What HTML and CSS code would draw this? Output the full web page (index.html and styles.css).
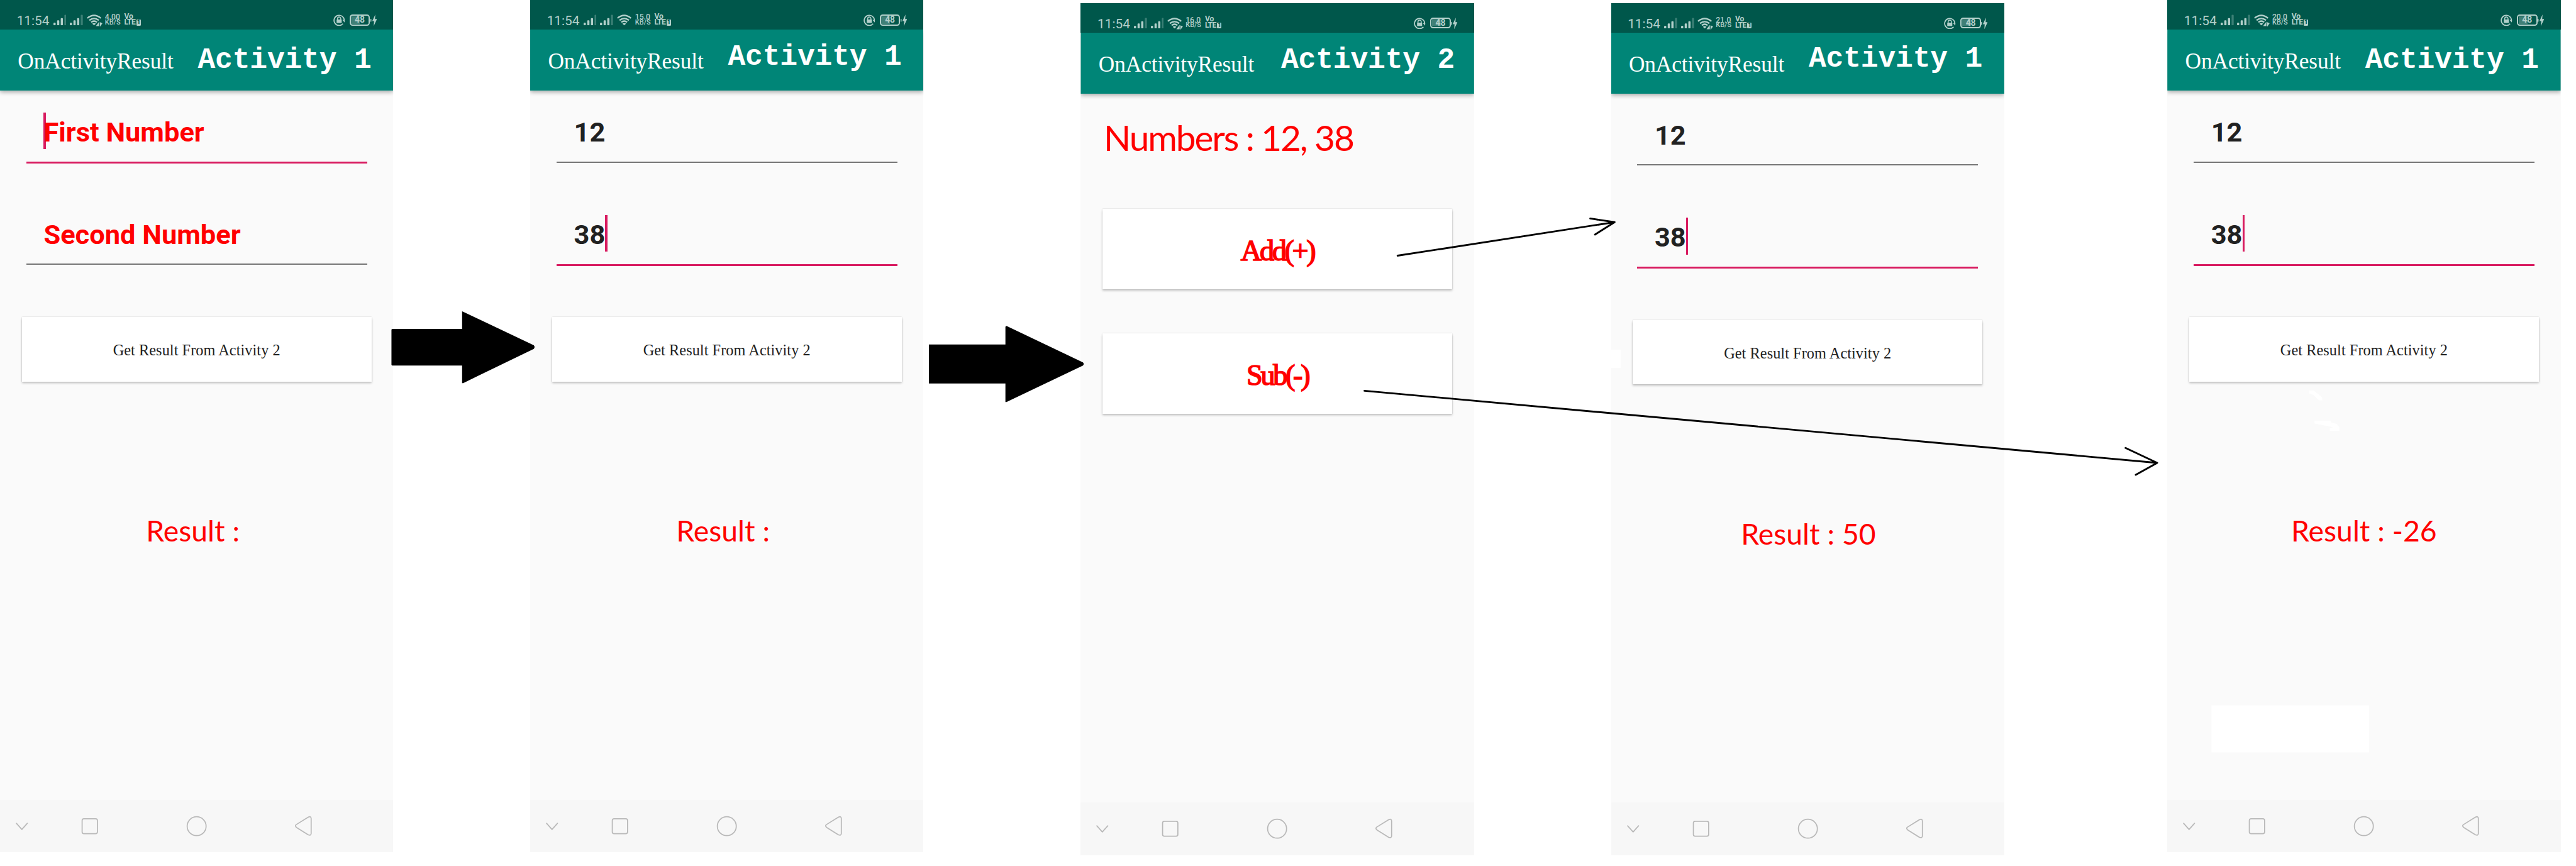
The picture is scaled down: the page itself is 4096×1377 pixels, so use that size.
FILE: index.html
```html
<!DOCTYPE html>
<html lang="en">
<head>
<meta charset="utf-8">
<title>OnActivityResult flow</title>
<link rel="stylesheet" href="styles.css">
</head>
<body>
<svg class="defs" aria-hidden="true">
  <symbol id="signal" viewBox="0 0 36 30">
    <rect x="0" y="22.500" width="6" height="7.500" rx="2.500"/><rect x="10" y="16" width="6" height="14" rx="2"/><rect x="20" y="10" width="6" height="20" rx="2"/><rect x="30" y="1" width="6" height="29" rx="2" opacity=".33"/>
  </symbol>
  <symbol id="wifi" viewBox="0 0 44 34">
    <g fill="none" stroke="currentColor" stroke-width="4"><path d="M1.500 10Q20 -5 38.500 10"/><path d="M7 16Q20 6 33 16"/><path d="M12 21.500Q20 15 28 21.500"/></g>
    <path d="M15 25.500Q20 21 25 25.500L20 30Z"/>
  </symbol>
  <symbol id="wifi-data" viewBox="0 0 44 34">
    <g fill="none" stroke="currentColor" stroke-width="4"><path d="M1.500 10Q20 -5 38.500 10"/><path d="M7 16Q20 6 33 16"/><path d="M12 21.500Q20 15 28 21.500"/></g>
    <path d="M15 25.500Q20 21 25 25.500L20 30Z"/>
    <path d="M25 32L34 20V32ZM36 34V21L43 24Z"/>
  </symbol>
  <symbol id="lock" viewBox="0 0 32 32">
    <path d="M26.500 25.500A14 14 0 1 1 30 16" fill="none" stroke="currentColor" stroke-width="3"/>
    <path d="M25 15H32L31 22Z"/><rect x="9" y="14" width="14" height="9.500" rx="1"/>
    <path d="M11.500 14V11.500a4.500 4.500 0 0 1 9 0V14" fill="none" stroke="currentColor" stroke-width="2.600"/>
  </symbol>
  <symbol id="bolt" viewBox="0 0 18 32"><rect x="0" y="12" width="2.500" height="8" rx="1"/><path d="M13.500 0L5 18H10L9 32L18 12.500H12.500Z"/></symbol>
  <symbol id="nav" viewBox="0 0 1080 144">
    <g fill="none" stroke="#b9b9b9" stroke-width="3" stroke-linecap="round" stroke-linejoin="round">
      <path d="M45 64L60 81L75 64"/><rect x="225.500" y="51.500" width="42" height="41" rx="5"/><circle cx="540" cy="72" r="26"/>
      <path d="M813 68L846 47.500Q854 43 854.500 51V92Q854 99 846 95.500L815 76Q809 71.500 813 68Z"/>
    </g>
  </symbol>
</svg>

<main class="flow">
  <section class="phone">
    <div class="status"><span class="time">11:54</span><svg class="signal"><use href="#signal"/></svg><svg class="signal"><use href="#signal"/></svg><svg class="wifi"><use href="#wifi-data"/></svg><span class="speed"><span>4.00</span><span class="unit">KB/S</span></span><span class="lte"><span>Vo</span><span class="lte-row">LTE<b>1</b></span></span><svg class="lock"><use href="#lock"/></svg><span class="battery">48</span><svg class="bolt"><use href="#bolt"/></svg></div>
    <header class="appbar"><h1 class="title">OnActivityResult</h1><span class="label label-a">Activity 1</span></header>
    <div class="content">
      <div class="field focused hint"><i class="caret caret-start"></i><span>First Number</span></div>
      <div class="field hint"><span>Second Number</span></div>
      <button class="card get">Get Result From Activity 2</button>
      <p class="result">Result :</p>
    </div>
    <svg class="nav"><use href="#nav"/></svg>
  </section>

  <section class="phone after-narrow">
    <div class="status"><span class="time">11:54</span><svg class="signal"><use href="#signal"/></svg><svg class="signal"><use href="#signal"/></svg><svg class="wifi"><use href="#wifi"/></svg><span class="speed"><span>15.0</span><span class="unit">KB/S</span></span><span class="lte"><span>Vo</span><span class="lte-row">LTE<b>1</b></span></span><svg class="lock"><use href="#lock"/></svg><span class="battery">48</span><svg class="bolt"><use href="#bolt"/></svg></div>
    <header class="appbar"><h1 class="title">OnActivityResult</h1><span class="label label-b">Activity 1</span></header>
    <div class="content">
      <div class="field"><span>12</span></div>
      <div class="field focused"><span>38</span><i class="caret"></i></div>
      <button class="card get">Get Result From Activity 2</button>
      <p class="result">Result :</p>
    </div>
    <svg class="nav"><use href="#nav"/></svg>
  </section>

  <section class="phone lowered after-medium">
    <div class="status"><span class="time">11:54</span><svg class="signal"><use href="#signal"/></svg><svg class="signal"><use href="#signal"/></svg><svg class="wifi"><use href="#wifi-data"/></svg><span class="speed"><span>16.0</span><span class="unit">KB/S</span></span><span class="lte"><span>Vo</span><span class="lte-row">LTE<b>1</b></span></span><svg class="lock"><use href="#lock"/></svg><span class="battery">48</span><svg class="bolt"><use href="#bolt"/></svg></div>
    <header class="appbar"><h1 class="title">OnActivityResult</h1><span class="label label-c">Activity 2</span></header>
    <div class="content">
      <p class="numbers">Numbers : 12, 38</p>
      <button class="card operation">Add(+)</button>
      <button class="card operation">Sub(-)</button>
    </div>
    <svg class="nav"><use href="#nav"/></svg>
  </section>

  <section class="phone lowered after-narrow">
    <div class="status"><span class="time">11:54</span><svg class="signal"><use href="#signal"/></svg><svg class="signal"><use href="#signal"/></svg><svg class="wifi"><use href="#wifi-data"/></svg><span class="speed"><span>21.0</span><span class="unit">KB/S</span></span><span class="lte"><span>Vo</span><span class="lte-row">LTE<b>1</b></span></span><svg class="lock"><use href="#lock"/></svg><span class="battery">48</span><svg class="bolt"><use href="#bolt"/></svg></div>
    <header class="appbar"><h1 class="title">OnActivityResult</h1><span class="label label-d">Activity 1</span></header>
    <div class="content">
      <div class="field"><span>12</span></div>
      <div class="field focused"><span>38</span><i class="caret"></i></div>
      <button class="card get">Get Result From Activity 2</button>
      <p class="result result-sum">Result : 50</p>
    </div>
    <svg class="nav"><use href="#nav"/></svg>
  </section>

  <section class="phone after-wide">
    <div class="status"><span class="time">11:54</span><svg class="signal"><use href="#signal"/></svg><svg class="signal"><use href="#signal"/></svg><svg class="wifi"><use href="#wifi-data"/></svg><span class="speed"><span>20.0</span><span class="unit">KB/S</span></span><span class="lte"><span>Vo</span><span class="lte-row">LTE<b>1</b></span></span><svg class="lock"><use href="#lock"/></svg><span class="battery">48</span><svg class="bolt"><use href="#bolt"/></svg></div>
    <header class="appbar"><h1 class="title">OnActivityResult</h1><span class="label label-e">Activity 1</span></header>
    <div class="content">
      <div class="field"><span>12</span></div>
      <div class="field focused"><span>38</span><i class="caret"></i></div>
      <button class="card get">Get Result From Activity 2</button>
      <p class="result result-diff">Result : -26</p>
    </div>
    <svg class="nav"><use href="#nav"/></svg>
  </section>
</main>

<!-- Arrows that connect the screens -->
<svg class="arrows" viewBox="0 0 7074 2378" preserveAspectRatio="none">
  <g fill="#fff">
    <rect x="4424" y="960" width="27" height="50"/>
    <rect x="6073" y="1937" width="433" height="129"/>
    <path d="M6341 1073H6354L6377 1091V1099H6368L6352 1084L6341 1080Z"/>
    <path d="M6356 1155H6400L6403 1161L6416 1164L6424 1172V1183H6398V1176L6407 1173L6372 1166L6356 1163Z"/>
  </g>
  <path d="M1077 903H1269V855L1272 856L1466 948Q1470 953 1466 958L1272 1052H1269V1004H1077L1075 1002V905Z"/>
  <path d="M2551 946H2761V897L2764 895L2974 995Q2978 999.500 2974 1004L2764 1104H2761V1053H2551Z"/>
  <g fill="none" stroke="#000" stroke-width="5" stroke-linecap="round" stroke-linejoin="round">
    <path d="M3838 702L4434 610M4367 600L4434 610L4380 644"/>
    <path d="M3747 1073L5924 1271M5837 1230L5924 1271L5865 1304"/>
  </g>
</svg>
</body>
</html>
```

FILE: styles.css
```css
/* 1rem is 100 drawing units on the 7074-unit-wide sheet */
html { font-size: 57.902px; }
* { box-sizing: border-box; }
body { margin: 0; background: #fff; position: relative; width: 70.74rem; height: 1377px; overflow: hidden; }
.defs { display: none; }
p, h1 { margin: 0; font-weight: 400; white-space: nowrap; }

.flow { display: flex; align-items: flex-start; }
.phone { width: 10.8rem; height: 23.4rem; flex: none; background: #fafafa; display: flex; flex-direction: column; }
.after-narrow { margin-left: 3.76rem; }
.after-medium { margin-left: 4.32rem; }
.after-wide { margin-left: 4.48rem; }
.lowered { margin-top: .08rem; }

.status { height: .81rem; flex: none; background: #00574b; color: #b3d0cb; fill: currentColor; display: flex; align-items: flex-start; padding: .4rem 0 0 .46rem; font-family: Roboto, sans-serif; white-space: nowrap; }
.time { width: 1rem; font-size: .36rem; line-height: .36rem; }
.signal { width: .36rem; height: .3rem; margin-right: .1rem; }
.wifi { width: .44rem; height: .34rem; margin-right: .06rem; }
.speed { width: .53rem; display: flex; flex-direction: column; font-size: .21rem; line-height: .15rem; font-weight: 500; }
.unit { font-size: .19rem; line-height: .15rem; }
.lte { width: .6rem; display: flex; flex-direction: column; font-size: .21rem; line-height: .13rem; font-weight: 700; margin-top: -.01rem; }
.lte-row { display: flex; align-items: center; line-height: .2rem; gap: .03rem; letter-spacing: -.01rem; }
.lte b { width: .12rem; height: .16rem; border-radius: .02rem; background: #b3d0cb; color: #00574b; font-size: .15rem; line-height: .16rem; text-align: center; letter-spacing: 0; }
.lock { width: .32rem; height: .32rem; margin-left: auto; }
.battery { width: .56rem; height: .3rem; margin: 0 .01rem 0 .13rem; border: .035rem solid #b3d0cb; border-radius: .08rem; background: linear-gradient(90deg, #3f7f76 50%, transparent 50%) .01rem .01rem / .47rem .21rem no-repeat; font-size: .24rem; line-height: .24rem; font-weight: 700; text-align: center; }
.bolt { width: .18rem; height: .32rem; margin-right: .45rem; }

.appbar { height: 1.68rem; flex: none; background: #008577; color: #fff; display: flex; align-items: flex-start; clip-path: inset(0 0 -.4rem 0); box-shadow: 0 .05rem .12rem rgba(0, 0, 0, .34); }
.title { width: 5.43rem; padding: .04rem 0 0 .49rem; font: 400 .61rem/1.68rem "Liberation Serif", serif; letter-spacing: -.002rem; }
.label { font: 700 .8rem/1rem "Liberation Mono", monospace; letter-spacing: -.003rem; white-space: nowrap; }
.label-a { margin-top: .35rem; }
.label-b { margin-top: .265rem; }
.label-c { margin: .275rem 0 0 .07rem; }
.label-d { margin-top: .237rem; }
.label-e { margin-top: .355rem; }

.content { flex: 1; padding: .6rem .6rem 0; }
.field { height: 1.375rem; margin: 0 .12rem 1.435rem; padding-left: .48rem; display: flex; border-bottom: .035rem solid #757575; font: 700 .75rem/1.09rem Roboto, sans-serif; color: #212121; white-space: nowrap; }
.focused { height: 1.4rem; margin-bottom: 1.41rem; border-bottom: .06rem solid #d81b60; }
.hint { color: #f00; }
.caret { width: .06rem; height: 1.01rem; background: #d81b60; }
.caret-start { margin-right: -.06rem; }

.card { display: block; width: 100%; border: 0; background: #fff; box-shadow: 0 .06rem .06rem rgba(0, 0, 0, .22), 0 0 .03rem rgba(0, 0, 0, .2); white-space: nowrap; }
.get { height: 1.77rem; padding: .046rem 0 0; font: 400 .42rem/1.72rem "Liberation Serif", serif; letter-spacing: .001rem; color: #212121; }
.result { margin: 3.6rem 0 0 3.41rem; font: 400 .8rem/1rem Lato, sans-serif; color: #f00; }
.result-sum { margin-left: 2.97rem; }
.result-diff { margin-left: 2.8rem; }

.numbers { margin: -.04rem 0 0 .03rem; font: 400 .98rem/1.3rem Lato, sans-serif; letter-spacing: -.036rem; color: #f00; }
.operation { height: 2.21rem; margin-top: 1.2rem; padding: 0; font: 400 .8rem/2.3rem "Liberation Serif", serif; letter-spacing: -.058rem; color: #f00; -webkit-text-stroke: .028rem #f00; }
.numbers + .operation { margin-top: 1.31rem; }

.nav { width: 100%; height: 1.44rem; flex: none; background: #f7f7f7; }
.arrows { position: absolute; left: 0; top: 0; width: 100%; height: 100%; }
```
